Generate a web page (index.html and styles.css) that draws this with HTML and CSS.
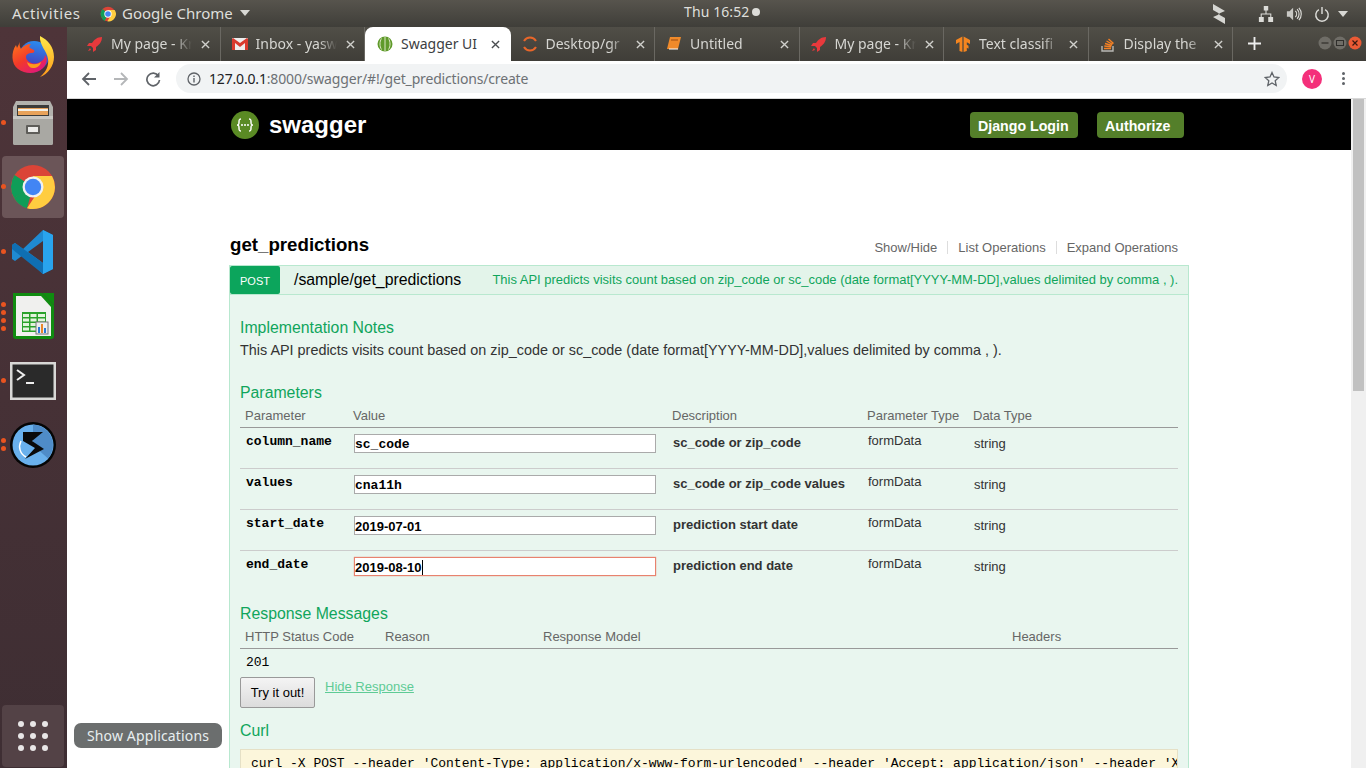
FILE: index.html
```html
<!DOCTYPE html>
<html lang="en">
<head>
<meta charset="utf-8">
<title>Swagger UI</title>
<link rel="stylesheet" href="styles.css">
</head>
<body>
<div class="desktop">
  <header class="topbar">
    <span class="activities">Activities</span>
    <span class="appmenu">
      <svg class="ico16" viewBox="0 0 24 24"><circle cx="12" cy="12" r="11" fill="#db4437"/><path d="M12 12 2.500 17.500A11 11 0 0 1 4 4.500z" fill="#0f9d58"/><path d="M12 12 7 22.500A11 11 0 0 1 2.500 17.500z" fill="#0f9d58"/><path d="M12 6h10a11 11 0 0 1-11 17l5-8z" fill="#ffcd40"/><circle cx="12" cy="12" r="5.500" fill="#fff"/><circle cx="12" cy="12" r="4.200" fill="#4285f4"/></svg>
      Google Chrome
      <i class="caret"></i>
    </span>
    <span class="clock">Thu 16:52<i class="dot"></i></span>
    <span class="tray">
      <svg class="trayz" viewBox="0 0 14 22"><path d="M1 1l12 7-7 3 7 4v6L1 14l7-3-7-4z" fill="#d6d6d2"/></svg>
      <svg class="trayi net" viewBox="0 0 18 18"><path d="M6.500 0h5v5h-5zM1 12.500h5.500V18H1zM11.500 12.500H17V18h-5.500zM8.400 5h1.200v3.400H15v4.100h-1.200V9.600H4.200v2.900H3V8.400h5.400z" fill="#dcdcd8"/></svg>
      <svg class="trayi vol" viewBox="0 0 18 18"><path d="M1 6h3l4-4v14l-4-4H1z" fill="#c8c8c4"/><path d="M10.500 5.500a5 5 0 0 1 0 7M12.500 3.500a8 8 0 0 1 0 11M14.500 2a10.500 10.500 0 0 1 0 14" fill="none" stroke="#dcdcd8" stroke-width="1.300"/></svg>
      <svg class="trayi pow" viewBox="0 0 18 18"><path d="M5.500 4a7 7 0 1 0 7 0M9 1v8" fill="none" stroke="#dcdcd8" stroke-width="1.600"/></svg>
      <i class="caret"></i>
    </span>
  </header>
  <div class="workspace">
    <nav class="dock">
      <div class="launcher">
        <svg viewBox="0 0 48 48">
          <defs>
            <linearGradient id="ffbody" x1="0" y1="0" x2="0.7" y2="1"><stop offset="0" stop-color="#ff7a1a"/><stop offset="0.55" stop-color="#f2392a"/><stop offset="1" stop-color="#e0187a"/></linearGradient>
            <linearGradient id="fftail" x1="0" y1="0" x2="0" y2="1"><stop offset="0" stop-color="#ffe94a"/><stop offset="1" stop-color="#ff9a1a"/></linearGradient>
            <linearGradient id="ffglobe" x1="0.6" y1="0" x2="0.4" y2="1"><stop offset="0" stop-color="#2a8cf0"/><stop offset="1" stop-color="#4a2fb0"/></linearGradient>
          </defs>
          <circle cx="25" cy="22" r="15" fill="url(#ffglobe)"/>
          <path d="M11 8c-1 3 0 5 1 7 2-3 6-5 10-5-2 2-2 3-1 4l4 2c1 1 0 3-2 3-3 0-6 1-6 4 0 4 6 8 12 6 5-2 7-5 7-8 3 3 2 9-2 13-6 6-17 7-25 1C2 30 2 18 7 11l1 3c1-2 2-4 3-6z" fill="url(#ffbody)"/>
          <path d="M31 2c8 4 14 11 14 21 0 9-6 17-14 20 6-5 9-11 8-18-1-8-9-14-8-23z" fill="url(#fftail)"/>
          <path d="M18 28c4 3 10 3 14 0-1 4-4 6-8 6-3 0-5-2-6-6z" fill="#ff9a1a"/>
        </svg>
      </div>
      <div class="launcher files"><i class="pip one"></i>
        <svg viewBox="0 0 48 48"><path d="M7 2h34l3 6v36a2 2 0 0 1-2 2H6a2 2 0 0 1-2-2V8z" fill="#b3b2ad"/><path d="M8 6h32v11H8z" fill="#3c3b39"/><path d="M9 9h30v7H9z" fill="#e8a25a"/><path d="M9 10h30v2H9z" fill="#f4f1e8"/><path d="M4 17h40v27a2 2 0 0 1-2 2H6a2 2 0 0 1-2-2z" fill="#a9a8a3"/><path d="M4 17h40v3H4z" fill="#c9c8c4"/><rect x="17" y="26" width="14" height="9" rx="1" fill="#5e5d59"/><rect x="19" y="28" width="10" height="5" fill="#ececea"/></svg>
      </div>
      <div class="launcher active"><i class="pip one"></i>
        <svg viewBox="0 0 48 48"><circle cx="24" cy="24" r="22" fill="#db4437"/><path d="M24 24 5 35A22 22 0 0 1 5.500 12z" fill="#0f9d58"/><path d="M24 24 18 45.200A22 22 0 0 1 5 35l6-4z" fill="#0f9d58"/><path d="M24 13h19a22 22 0 0 1-25 32.200l10-15z" fill="#ffcd40"/><circle cx="24" cy="24" r="10.500" fill="#f1f1f1"/><circle cx="24" cy="24" r="8.200" fill="#4285f4"/></svg>
      </div>
      <div class="launcher"><i class="pip one"></i>
        <svg viewBox="0 0 48 48"><path d="M34 2 44 7v34l-10 5-20-19-8 6-3-2v-14l3-2 8 6z" fill="#1f8ad2"/><path d="M34 2 44 7v34l-10 5z" fill="#29a4ee"/><path d="M34 13 19 24l15 11z" fill="#4a3237"/><path d="M6 15 34 35v11L3 21v-4z" fill="#0f6fb3"/></svg>
      </div>
      <div class="launcher"><i class="pip four"></i><i class="pip four b"></i><i class="pip four c"></i><i class="pip four d"></i>
        <svg viewBox="0 0 48 48"><path d="M4 1h29l12 12v31a3 3 0 0 1-3 3H7a3 3 0 0 1-3-3z" fill="#108c10"/><path d="M7 4h25l10 11v29H7z" fill="#f0f0ee"/><path d="M33 1h12v12z" fill="#108c10"/><g fill="#2aa12a"><path d="M13 20h24v20H13z"/></g><g fill="#e3f3dc"><path d="M14 22h6v3h-6zM21.500 22h6v3h-6zM29 22h7v3h-7zM14 26.500h6v3h-6zM21.500 26.500h6v3h-6zM29 26.500h7v3h-7zM14 31h6v3h-6zM21.500 31h6v3h-6zM14 35.500h6v3h-6zM21.500 35.500h6v3h-6z"/></g><rect x="27" y="30" width="12" height="12" fill="#eee" stroke="#777"/><path d="M29 35h2v6h-2z" fill="#2b7ad6"/><path d="M32 32h2v9h-2z" fill="#e8872a"/><path d="M35 36h2v5h-2z" fill="#2b7ad6"/></svg>
      </div>
      <div class="launcher"><i class="pip one"></i><svg class="term" viewBox="0 0 48 40"><rect x="1" y="1" width="46" height="38" fill="#d8d8d6"/><rect x="3.500" y="3.500" width="41" height="33" fill="#2a2a2a"/><path d="M8 9l7 5-7 5" fill="none" stroke="#eee" stroke-width="2"/><path d="M17 21h8v2h-8z" fill="#eee"/></svg></div>
      <div class="launcher"><i class="pip two"></i><i class="pip two b"></i>
        <svg viewBox="0 0 48 48"><circle cx="24" cy="24" r="23" fill="#050505"/><circle cx="24" cy="24" r="20.500" fill="#69b0ec"/><path d="M24 3.500a20.500 20.500 0 0 1 15 34L24 24z" fill="#4f8cc8"/><path d="M14 11h20l-11 9 12 8-19 10 10-11-12-7z" fill="#0a0a0a"/><path d="M12 20c-3 6-1 13 5 16" fill="none" stroke="#fff" stroke-width="1.500"/></svg>
      </div>
      <div class="grow"></div>
      <div class="launcher apps">
        <svg viewBox="0 0 30 30"><g fill="#e8e6e6"><circle cx="3" cy="3" r="3"/><circle cx="15" cy="3" r="3"/><circle cx="27" cy="3" r="3"/><circle cx="3" cy="15" r="3"/><circle cx="15" cy="15" r="3"/><circle cx="27" cy="15" r="3"/><circle cx="3" cy="27" r="3"/><circle cx="15" cy="27" r="3"/><circle cx="27" cy="27" r="3"/></g></svg>
      </div>
    </nav>
    <div class="browser">
      <div class="tabstrip">
        <div class="tab"><svg class="fav" viewBox="0 0 16 16"><path d="M15 1c-5 0-8 3-10 6H2L0 10h4l2 2v4l3-2v-3c3-2 6-5 6-10zM3 12l-2 3 3-1z" fill="#e8393c"/></svg><span class="tab-title">My page - Kr</span><svg class="close" viewBox="0 0 10 10"><path d="M1 1l8 8M9 1 1 9"/></svg></div>
        <div class="tab"><svg class="fav" viewBox="0 0 16 16"><rect y="2" width="16" height="12" rx="1" fill="#eee"/><path d="M0 3v11h3V7l5 4 5-4v7h3V3l-1-1-7 5-7-5z" fill="#d93a2e"/></svg><span class="tab-title">Inbox - yasw</span><svg class="close" viewBox="0 0 10 10"><path d="M1 1l8 8M9 1 1 9"/></svg></div>
        <div class="tab current"><svg class="fav" viewBox="0 0 16 16"><circle cx="8" cy="8" r="7.500" fill="#5f9a2a"/><path d="M8 1v14M4.500 2.500c-2 3-2 8 0 11M11.500 2.500c2 3 2 8 0 11" stroke="#dfe9c8" fill="none" stroke-width="1"/></svg><span class="tab-title">Swagger UI</span><svg class="close" viewBox="0 0 10 10"><path d="M1 1l8 8M9 1 1 9"/></svg></div>
        <div class="tab"><svg class="fav" viewBox="0 0 16 16"><path d="M2 5a7 7 0 0 1 12 0M2 11a7 7 0 0 0 12 0" fill="none" stroke="#e8662a" stroke-width="2"/></svg><span class="tab-title">Desktop/gr</span><svg class="close" viewBox="0 0 10 10"><path d="M1 1l8 8M9 1 1 9"/></svg></div>
        <div class="tab"><svg class="fav" viewBox="0 0 16 16"><path d="M4 1h11l-3 12H1z" fill="#f08a2a"/><path d="M3 13h9" stroke="#fff" stroke-width="1"/><path d="M5 4h7" stroke="#9a4a10"/></svg><span class="tab-title">Untitled</span><svg class="close" viewBox="0 0 10 10"><path d="M1 1l8 8M9 1 1 9"/></svg></div>
        <div class="tab"><svg class="fav" viewBox="0 0 16 16"><path d="M15 1c-5 0-8 3-10 6H2L0 10h4l2 2v4l3-2v-3c3-2 6-5 6-10zM3 12l-2 3 3-1z" fill="#e8393c"/></svg><span class="tab-title">My page - Kr</span><svg class="close" viewBox="0 0 10 10"><path d="M1 1l8 8M9 1 1 9"/></svg></div>
        <div class="tab"><svg class="fav" viewBox="0 0 16 16"><path d="M7.400.5 1 4v4l3.500-2v9l2.900 1zM8.600.5 15 4v4l-3.200-1.800v2.500l1.700 1v3l-1.700-1v3.200L8.600 16z" fill="#f5851f"/></svg><span class="tab-title">Text classifi</span><svg class="close" viewBox="0 0 10 10"><path d="M1 1l8 8M9 1 1 9"/></svg></div>
        <div class="tab"><svg class="fav" viewBox="0 0 16 16"><path d="M2 10v5h11v-5" fill="none" stroke="#b8b8b4" stroke-width="1.400"/><path d="M4 12.500h7M4.300 10l7 .8M5 7.500l6.800 2M6.500 5l6 3.300M8.500 3l5 4.500" stroke="#f48024" stroke-width="1.400"/></svg><span class="tab-title">Display the</span><svg class="close" viewBox="0 0 10 10"><path d="M1 1l8 8M9 1 1 9"/></svg></div>
        <span class="newtab"><svg viewBox="0 0 14 14"><path d="M7 0v14M0 7h14"/></svg></span>
        <div class="winctl">
          <svg class="wc" viewBox="0 0 14 14"><circle cx="7" cy="7" r="6.500" fill="#6f6d67"/><path d="M3.500 7h7" stroke="#2f2e2b" stroke-width="1.200"/></svg>
          <svg class="wc" viewBox="0 0 14 14"><circle cx="7" cy="7" r="6.500" fill="#6f6d67"/><rect x="3.500" y="4.500" width="7" height="5" fill="none" stroke="#2f2e2b"/></svg>
          <svg class="wc" viewBox="0 0 14 14"><circle cx="7" cy="7" r="6.500" fill="#ea5a35"/><path d="M4.500 4.500l5 5M9.500 4.500l-5 5" stroke="#3a1a10" stroke-width="1.200"/></svg>
        </div>
      </div>
      <div class="toolbar">
        <svg class="nav" viewBox="0 0 16 16"><path d="M15 8H2M8 2 2 8l6 6" fill="none" stroke="#5f6368" stroke-width="1.800"/></svg>
        <svg class="nav" viewBox="0 0 16 16"><path d="M1 8h13M8 2l6 6-6 6" fill="none" stroke="#b4b6b8" stroke-width="1.800"/></svg>
        <svg class="nav" viewBox="0 0 16 16"><path d="M13.500 5A6.300 6.300 0 1 0 14.500 9" fill="none" stroke="#5f6368" stroke-width="1.700"/><path d="M14.500 1v5.500H9z" fill="#5f6368"/></svg>
        <div class="omnibox">
          <svg class="info" viewBox="0 0 14 14"><circle cx="7" cy="7" r="6" fill="none" stroke="#5f6368" stroke-width="1.300"/><path d="M6.300 6h1.400v4.500H6.300zM6.300 3.500h1.400v1.400H6.300z" fill="#5f6368"/></svg>
          <span class="url"><b>127.0.0.1</b>:8000/swagger/#!/get_predictions/create</span>
          <svg class="star" viewBox="0 0 16 16"><path d="m8 1.500 2 4.500 4.800.5-3.600 3.200 1 4.800L8 12l-4.200 2.500 1-4.800L1.200 6.500 6 6z" fill="none" stroke="#5f6368" stroke-width="1.300"/></svg>
        </div>
        <span class="avatar">V</span>
        <span class="kebab"><i></i><i></i><i></i></span>
      </div>
      <div class="viewport">
        <main class="page">
          <div class="swagger-head">
            <div class="container head-row">
              <svg class="logo" viewBox="0 0 28 28"><circle cx="14" cy="14" r="14" fill="#5a8a24"/><path d="M10 8c-2 0-2 1-2 3s0 3-2 3c2 0 2 1 2 3s0 3 2 3M18 8c2 0 2 1 2 3s0 3 2 3c-2 0-2 1-2 3s0 3-2 3" fill="none" stroke="#fff" stroke-width="1.500"/><g fill="#fff"><circle cx="11" cy="14" r="1"/><circle cx="14" cy="14" r="1"/><circle cx="17" cy="14" r="1"/></g></svg>
              <span class="brand">swagger</span>
              <span class="spacer"></span>
              <a class="head-btn login">Django Login</a>
              <a class="head-btn auth">Authorize</a>
            </div>
          </div>
          <div class="container content">
            <div class="resource-row">
              <h2>get_predictions</h2>
              <ul class="res-links">
                <li>Show/Hide</li>
                <li>List Operations</li>
                <li>Expand Operations</li>
              </ul>
            </div>
            <section class="op">
              <div class="op-head">
                <span class="method">POST</span>
                <span class="path">/sample/get_predictions</span>
                <span class="summary">This API predicts visits count based on zip_code or sc_code (date format[YYYY-MM-DD],values delimited by comma , ).</span>
              </div>
              <div class="op-body">
                <h4 class="first">Implementation Notes</h4>
                <p class="notes">This API predicts visits count based on zip_code or sc_code (date format[YYYY-MM-DD],values delimited by comma , ).</p>
                <h4 class="params-title">Parameters</h4>
                <div class="ptable">
                  <div class="prow phead"><span>Parameter</span><span>Value</span><span>Description</span><span>Parameter Type</span><span>Data Type</span></div>
                  <div class="prow"><code>column_name</code><span class="field"><span class="input mono">sc_code</span></span><strong>sc_code or zip_code</strong><span class="ptype">formData</span><span class="dtype">string</span></div>
                  <div class="prow"><code>values</code><span class="field"><span class="input mono">cna11h</span></span><strong>sc_code or zip_code values</strong><span class="ptype">formData</span><span class="dtype">string</span></div>
                  <div class="prow"><code>start_date</code><span class="field"><span class="input">2019-07-01</span></span><strong>prediction start date</strong><span class="ptype">formData</span><span class="dtype">string</span></div>
                  <div class="prow"><code>end_date</code><span class="field"><span class="input focus">2019-08-10<i class="cursor"></i></span></span><strong>prediction end date</strong><span class="ptype">formData</span><span class="dtype">string</span></div>
                </div>
                <h4 class="resp-title">Response Messages</h4>
                <div class="rrow"><span>HTTP Status Code</span><span>Reason</span><span>Response Model</span><span>Headers</span></div>
                <div class="status">201</div>
                <div class="actions"><button class="try">Try it out!</button><a class="hide-resp">Hide Response</a></div>
                <h4 class="curl-title">Curl</h4>
                <pre class="curl">curl -X POST --header 'Content-Type: application/x-www-form-urlencoded' --header 'Accept: application/json' --header 'X-CSRFToken: token'</pre>
              </div>
            </section>
          </div>
        </main>
        <div class="scrollbar"><div class="thumb"></div></div>
      </div>
    </div>
  </div>
  <div class="tooltip">Show Applications</div>
</div>
</body>
</html>
```
FILE: styles.css
```css
* { box-sizing: border-box; }
html, body { margin: 0; height: 100%; overflow: hidden; }
body { font-family: "Liberation Sans", Arial, sans-serif; background: #fff; }
.desktop { position: relative; width: 1366px; height: 768px; display: flex; flex-direction: column; overflow: hidden; }

/* GNOME top bar */
.topbar { height: 27px; flex: none; display: flex; align-items: center; padding-bottom: 2px; color: #dfdfdb; font: 15px "Noto Sans", "Open Sans", sans-serif; background: linear-gradient(#57544d, #3f3e39); position: relative; }
.activities { margin-left: 12px; width: 88px; letter-spacing: 0.6px; }
.appmenu { display: flex; align-items: center; gap: 6px; }
.ico16 { width: 16px; height: 16px; margin-top: 2px; }
.caret { display: inline-block; width: 0; height: 0; border: 5px solid transparent; border-top: 6px solid #d8d8d4; border-bottom: 0; margin-left: 1px; }
.clock { position: absolute; left: 684px; top: 2px; display: flex; align-items: center; font-size: 14px; letter-spacing: 0.1px; }
.dot { width: 8px; height: 8px; border-radius: 50%; background: #dcdcd8; margin-left: 3px; }
.tray { position: absolute; right: 0; top: 0; height: 27px; display: flex; align-items: center; padding-right: 18px; }
.trayz { width: 14px; height: 22px; margin-right: 32px; }
.trayi { width: 16px; height: 16px; margin-right: 12px; }
.tray .pow { margin-right: 7px; }

/* dock */
.workspace { flex: 1; display: flex; min-height: 0; }
.dock { width: 67px; flex: none; display: flex; flex-direction: column; align-items: flex-start; background: linear-gradient(#4e3439, #3e2e33); padding-left: 2px; }
.launcher { position: relative; width: 62px; height: 62px; margin-bottom: 2.500px; border-radius: 4px; display: flex; align-items: center; justify-content: center; }
.launcher svg { width: 48px; height: 48px; }
.launcher svg.term { width: 48px; height: 40px; }
.launcher.active { background: #6b5558; }
.launcher.apps { background: #534246; margin-bottom: 1px; }
.launcher.apps svg { width: 30px; height: 30px; }
.grow { flex: 1; }
.pip { position: absolute; left: -1px; top: 28px; width: 5px; height: 5px; border-radius: 50%; background: #e95420; }
.pip.four { top: 17px; }
.pip.four.b { top: 25px; }
.pip.four.c { top: 33px; }
.pip.four.d { top: 41px; }
.pip.two { top: 24px; }
.pip.two.b { top: 32px; }

/* chrome */
.browser { flex: 1; min-width: 0; display: flex; flex-direction: column; }
.tabstrip { height: 34px; flex: none; display: flex; align-items: stretch; background: linear-gradient(#504e47, #3f3d38); padding-left: 9px; position: relative; color: #d6d6d2; font: 14px/32px "Noto Sans", "Open Sans", sans-serif; }
.tab { width: 144.500px; height: 34px; position: relative; display: flex; align-items: center; padding: 0 0 0 11px; border-right: 1px solid #6a6862; }
.tab.current { background: #fff; color: #3c4043; border-right: 0; border-radius: 8px 8px 0 0; width: 145.500px; padding-left: 12px; }
.fav { width: 16px; height: 16px; flex: none; }
.tab-title { margin-left: 8px; width: 81px; overflow: hidden; white-space: nowrap; -webkit-mask-image: linear-gradient(90deg, #000 78%, transparent); mask-image: linear-gradient(90deg, #000 78%, transparent); }
.current .tab-title { -webkit-mask-image: none; mask-image: none; }
.close { width: 9px; height: 9px; margin-left: 9px; fill: none; stroke: #d0d0cc; stroke-width: 1.500; flex: none; }
.current .close { stroke: #4a4d50; }
.newtab { margin-left: 15px; padding-top: 10px; }
.newtab svg { display: block; width: 13px; height: 13px; fill: none; stroke: #eee; stroke-width: 2; }
.winctl { position: absolute; right: 4px; top: 9px; display: flex; gap: 1px; }
.wc { width: 14px; height: 14px; }
.toolbar { height: 38px; flex: none; display: flex; align-items: center; background: #fff; border-bottom: 1px solid #d8d8d8; padding: 0 0 2px 14px; }
.nav { width: 16px; height: 16px; margin-right: 16px; }
.omnibox { width: 1111px; height: 29px; margin-left: -1px; border-radius: 15px; background: #f1f3f4; display: flex; align-items: center; padding-left: 11px; font: 14px "Noto Sans", "Open Sans", sans-serif; color: #6d7175; letter-spacing: -0.170px; }
.info { width: 14px; height: 14px; margin-right: 8px; flex: none; }
.url { flex: 1; white-space: nowrap; }
.url b { font-weight: 400; color: #202124; }
.star { width: 16px; height: 16px; margin-right: 7px; }
.avatar { width: 20px; height: 20px; border-radius: 50%; background: #f4307a; color: #fff; font: 10px/20px "Noto Sans", sans-serif; text-align: center; margin-left: 15px; }
.kebab { display: flex; flex-direction: column; gap: 2px; margin-left: 20px; }
.kebab i { width: 3px; height: 3px; border-radius: 50%; background: #5f6368; }

/* page */
.viewport { flex: 1; min-height: 0; display: flex; overflow: hidden; background: #fff; }
.page { flex: 1; min-width: 0; overflow: hidden; }
.scrollbar { width: 15px; flex: none; background: #f0f0f0; padding-left: 2px; }
.thumb { width: 11px; height: 292px; background: #c1c1c1; }
.container { width: 960px; margin: 0 auto; }
.swagger-head { height: 51px; background: #000; }
.head-row { display: flex; align-items: center; height: 51px; padding-right: 5px; }
.logo { width: 28px; height: 28px; margin-left: 2px; }
.brand { color: #fff; font-weight: 700; font-size: 24px; margin-left: 10px; }
.spacer { flex: 1; }
.head-btn { background: #547f2a; color: #fff; font-weight: 700; font-size: 14.200px; line-height: 28px; height: 26px; padding: 0 0 0 8px; border-radius: 4px; }
.head-btn.login { width: 108px; margin-right: 19px; }
.head-btn.auth { width: 87px; }
.content { padding-top: 84px; }
.resource-row { height: 31px; display: flex; align-items: center; justify-content: space-between; padding: 0 0 10px 1px; }
h2 { margin: 0; font-size: 18.700px; font-weight: 700; color: #000; }
.res-links { list-style: none; margin: 0; padding: 5px 11px 0 0; display: flex; font-size: 13px; color: #666; }
.res-links li { padding: 0 10px; border-right: 1px solid #ddd; line-height: 13px; }
.res-links li:last-child { border-right: 0; padding-right: 0; }
.op { width: 960px; font-size: 13px; }
.op-head { height: 30px; display: flex; align-items: center; background: #e3f4ea; border: 1px solid #b8e8cf; position: relative; }
.method { width: 50px; height: 28px; background: #0ca55c; color: #fff; font-size: 11px; line-height: 30px; text-align: center; border-radius: 2px; }
.path { font-size: 15.840px; color: #000; margin-left: 14px; }
.summary { margin-left: auto; color: #10a55c; font-size: 12.960px; padding: 0 10px 2px 0; white-space: nowrap; }
.op-body { background: #e9f6ef; border: 1px solid #b8e8cf; border-top: 0; padding: 0 10px; height: 480px; }
h4 { margin: 0; font-size: 15.840px; font-weight: 400; color: #10a55c; line-height: 18px; }
h4.first { padding-top: 24px; height: 42px; }
.notes { margin: 3px 0 0; font-size: 14.400px; line-height: 20px; color: #333; height: 20px; }
.params-title { margin-top: 24px; }
.ptable { margin-top: 5px; }
.prow { display: grid; grid-template-columns: 112px 320px 195px 106px 1fr; height: 41px; border-bottom: 1px solid #ccc; font-size: 13px; color: #333; }
.prow:last-child { border-bottom: 0; }
.phead { height: 21px; border-bottom: 1px solid #999; color: #666; line-height: 17px; }
.phead span { padding-left: 0; }
.phead span:first-child { padding-left: 5px; }
.phead span:nth-child(2) { padding-left: 1px; }
.prow code { font: 700 13px/16px "Liberation Mono", monospace; color: #000; padding: 6px 0 0 6px; }
.field { padding: 6px 0 0 2px; }
.input { display: block; width: 302px; height: 19px; background: #fff; border: 1px solid #aaa; font: 700 13px/20px "Liberation Sans", sans-serif; color: #000; }
.input.mono { font-family: "Liberation Mono", monospace; }
.input.focus { border-color: #e8826e; box-shadow: 0 0 1px #e8826e; }
.cursor { display: inline-block; width: 1px; height: 15px; background: #000; vertical-align: -3px; }
.prow strong { font-weight: 700; color: #333; padding: 7px 0 0 1px; line-height: 16px; }
.ptype { padding: 5px 0 0 1px; line-height: 16px; }
.dtype { padding: 8px 0 0 1px; line-height: 16px; }
.resp-title { margin-top: 13px; }
.rrow { margin-top: 5px; display: grid; grid-template-columns: 140px 158px 469px 1fr; height: 21px; border-bottom: 1px solid #999; color: #666; line-height: 17px; padding-left: 5px; }
.status { font: 13px/16px "Liberation Mono", monospace; color: #000; padding: 6px 0 0 6px; height: 28px; }
.actions { display: flex; align-items: flex-start; height: 31px; }
.try { width: 75px; height: 31px; font: 13px "Liberation Sans", sans-serif; color: #000; border: 1px solid #999; border-radius: 2px; background: linear-gradient(#f4f4f4, #dcdcdc); padding: 0; }
.hide-resp { margin: 2px 0 0 10px; color: #5ecb95; text-decoration: underline; line-height: 15px; }
.curl-title { margin-top: 14px; }
.curl { margin: 9px 0 0; height: 60px; padding: 6px 10px; background: #fcf6db; border: 1px solid #e5e0c6; font: 13px/15px "Liberation Mono", monospace; color: #000; overflow: hidden; white-space: nowrap; }

/* tooltip over the desktop */
.tooltip { position: absolute; left: 74px; top: 723px; width: 148px; height: 25px; border-radius: 7px; background: #6b6e6e; color: #e8eef0; font: 14px/25px "Noto Sans", "Open Sans", sans-serif; letter-spacing: 0.15px; text-align: center; }
```
